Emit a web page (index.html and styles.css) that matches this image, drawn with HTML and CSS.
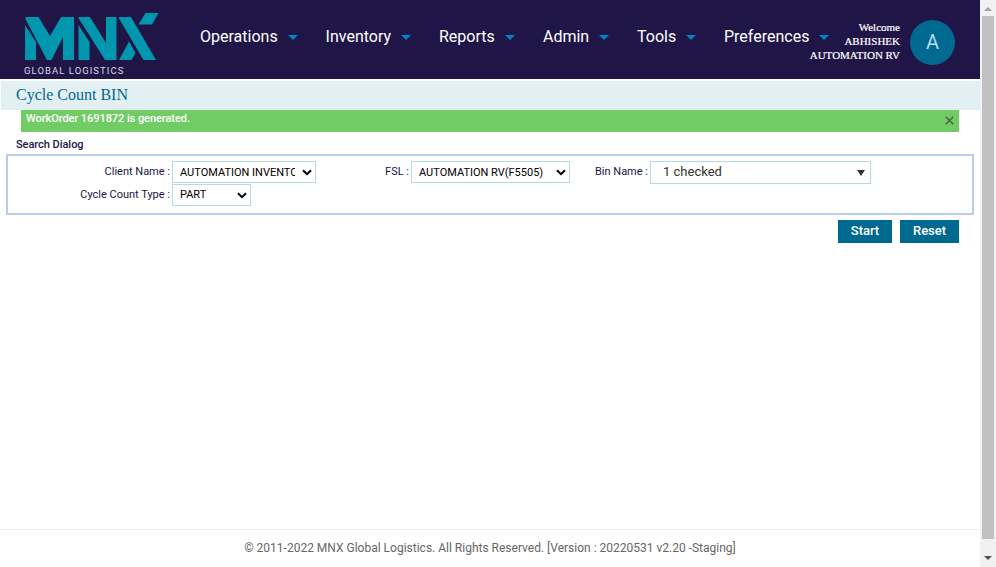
FILE: index.html
```html
<!DOCTYPE html>
<html lang="en">
<head>
<meta charset="utf-8">
<title>Cycle Count BIN</title>
<link rel="stylesheet" href="styles.css">
</head>
<body>
<div class="page">
  <header class="header">
    <div class="logo">
      <svg class="mark" width="136" height="50" viewBox="24 12 136 50" fill="#0096ae">
        <path d="M25.500 17H38.500L50 36L61 17H74V60H63V37L51.500 60H47L25.500 19Z"/>
        <path d="M25 25L36 42V60H25Z"/>
        <path d="M78.500 17H90L106 43V17H116.500V60H105L78.500 18Z"/>
        <path d="M78.500 25L89.500 42V60H78.500Z"/>
        <path d="M119 17H131L156 60H143.500L119 18.500Z"/>
        <path d="M145.500 13H158.500L152 24.500H138.500Z"/>
        <path d="M129 41.500L135.500 53L131.500 60H119Z"/>
      </svg>
      <span class="tagline">GLOBAL LOGISTICS</span>
    </div>
    <nav class="nav">
      <a class="item operations">Operations<i class="caret"></i></a>
      <a class="item inventory">Inventory<i class="caret"></i></a>
      <a class="item reports">Reports<i class="caret"></i></a>
      <a class="item admin">Admin<i class="caret"></i></a>
      <a class="item tools">Tools<i class="caret"></i></a>
      <a class="item preferences">Preferences<i class="caret"></i></a>
    </nav>
    <div class="user">Welcome<br>ABHISHEK<br>AUTOMATION RV</div>
    <div class="avatar">A</div>
  </header>
  <h1 class="title">Cycle Count BIN</h1>
  <div class="notice"><span>WorkOrder 1691872 is generated.</span>
    <svg class="close" width="9" height="9" viewBox="0 0 9 9"><path d="M.8.8L8.200 8.200M8.200.8L.8 8.200" stroke="#50604e" stroke-width="1.500"/></svg>
  </div>
  <h2 class="caption">Search Dialog</h2>
  <section class="search">
    <div class="row">
      <label class="label first">Client Name :</label>
      <div class="select client"><span class="value">AUTOMATION INVENTORY</span><svg class="chev" width="10" height="7" viewBox="0 0 10 7"><path d="M1 1.200L5 5.200L9 1.200"/></svg></div>
      <label class="label fsl-label">FSL :</label>
      <div class="select fsl"><span class="value">AUTOMATION RV(F5505)</span><svg class="chev" width="10" height="7" viewBox="0 0 10 7"><path d="M1 1.200L5 5.200L9 1.200"/></svg></div>
      <label class="label bin-label">Bin Name :</label>
      <div class="bin"><span>1 checked</span><i class="bin-caret"></i></div>
    </div>
    <div class="row second">
      <label class="label first">Cycle Count Type :</label>
      <div class="select type"><span class="value">PART</span><svg class="chev" width="10" height="7" viewBox="0 0 10 7"><path d="M1 1.200L5 5.200L9 1.200"/></svg></div>
    </div>
  </section>
  <div class="actions"><button class="button start">Start</button><button class="button reset">Reset</button></div>
  <footer class="footer">© 2011-2022 MNX Global Logistics. All Rights Reserved. [Version : 20220531 v2.20 -Staging]</footer>
</div>
<div class="scrollbar"><i class="up"></i><i class="thumb"></i><i class="down"></i></div>
</body>
</html>
```
FILE: styles.css
```css
* { box-sizing: border-box; }
body { margin: 0; height: 567px; overflow: hidden; display: flex; background: #fff; font-family: Roboto, sans-serif; }
.page { width: 980px; height: 567px; display: flex; flex-direction: column; }
.header { height: 79px; flex: none; background: #201547; display: flex; }
.logo { width: 176px; margin-left: 24px; padding-top: 12px; display: flex; flex-direction: column; }
.mark { display: block; }
.tagline { font-size: 9.500px; line-height: 12px; margin-top: 3px; letter-spacing: 1.05px; color: #dcd9e4; white-space: nowrap; }
.nav { display: flex; width: 630px; padding-top: 26px; flex: none; }
.item { display: flex; align-items: flex-start; justify-content: space-between; height: 22px; padding-right: 28px; font-size: 16px; line-height: 21px; color: #fff; flex: none; }
.operations { width: 125.6px; }
.inventory { width: 113.4px; }
.reports { width: 104px; }
.admin { width: 94px; }
.tools { width: 87px; }
.preferences { width: 133px; }
.caret { border: 5px solid transparent; border-top-color: #0083c5; border-bottom: 0; margin-top: 9px; }
.user { width: 100px; margin-left: -30px; padding-top: 20px; text-align: right; font: 11px/14px "Liberation Serif", serif; color: #fff; -webkit-text-stroke: .2px #fff; white-space: nowrap; flex: none; }
.avatar { width: 45px; height: 45px; margin: 20px 0 0 10px; border-radius: 50%; background: #00698f; color: #b3dcec; font-size: 20px; line-height: 45px; text-align: center; flex: none; }
.title { margin: 2px 0 0 1px; height: 29px; flex: none; padding-left: 15px; background: #e2f0f4; color: #00698f; font: 16px/28px "Liberation Serif", serif; }
.notice { width: 938px; height: 22px; flex: none; margin-left: 21px; padding: 0 5.5px 0 5px; background: #72cc66; color: #fff; font-size: 11px; font-weight: 500; letter-spacing: -.06px; line-height: 17px; display: flex; justify-content: space-between; }
.close { margin-top: 6px; }
.caption { margin: 0 0 0 16px; height: 22px; flex: none; font-size: 11px; font-weight: 500; letter-spacing: -.04px; line-height: 25px; color: #201547; }
.search { width: 968px; height: 61px; flex: none; margin-left: 6px; padding-top: 5px; border: 2px solid #b7cfea; }
.row { display: flex; height: 23px; }
.label { font-size: 11px; line-height: 21px; color: #201547; text-align: right; white-space: nowrap; flex: none; }
.first { width: 162px; margin-right: 2px; }
.fsl-label { width: 93px; margin-right: 2px; }
.bin-label { width: 78px; margin-right: 2px; }
.select { height: 22px; border: 1px solid #b5dbe0; display: flex; align-items: center; justify-content: space-between; padding: 0 3px 0 7px; font-size: 11px; color: #000; flex: none; }
.value { overflow: hidden; white-space: nowrap; line-height: 20px; }
.row:first-child .value { padding-top: 1px; }
.client { width: 144px; }
.client .value { width: 115px; margin-right: 1px; }
.fsl { width: 159px; }
.type { width: 79px; }
.chev { fill: none; stroke: #000; stroke-width: 2; flex: none; }
.bin { width: 221px; height: 23px; border: 1px solid #b5dbe0; display: flex; justify-content: space-between; padding: 0 5px 0 12px; font-size: 13px; line-height: 20px; color: #333; }
.bin-caret { border: 4.500px solid transparent; border-top: 6px solid #333; border-bottom: 0; margin-top: 8px; height: 6px; }
.actions { height: 28px; flex: none; display: flex; justify-content: flex-end; gap: 8px; padding: 5px 21px 0 0; }
.button { height: 23px; padding: 0 0 2px; border: 0; background: #00698f; color: #fff; font: 500 13px/21px Roboto, sans-serif; letter-spacing: -.04px; }
.start { width: 54px; }
.reset { width: 59px; }
.footer { height: 38px; margin-top: auto; border-top: 1px solid #eee; color: #666; font-size: 12px; line-height: 36px; text-align: center; flex: none; }
.scrollbar { width: 16px; height: 567px; background: #f1f1f1; display: flex; flex-direction: column; align-items: center; }
.up { border: 4px solid transparent; border-bottom: 4px solid #a3a3a3; border-top: 0; margin-top: 7px; }
.thumb { width: 12px; height: 523px; margin-top: 5px; background: #c1c1c1; }
.down { border: 4px solid transparent; border-top: 4px solid #505050; border-bottom: 0; margin-top: 17px; }
```
